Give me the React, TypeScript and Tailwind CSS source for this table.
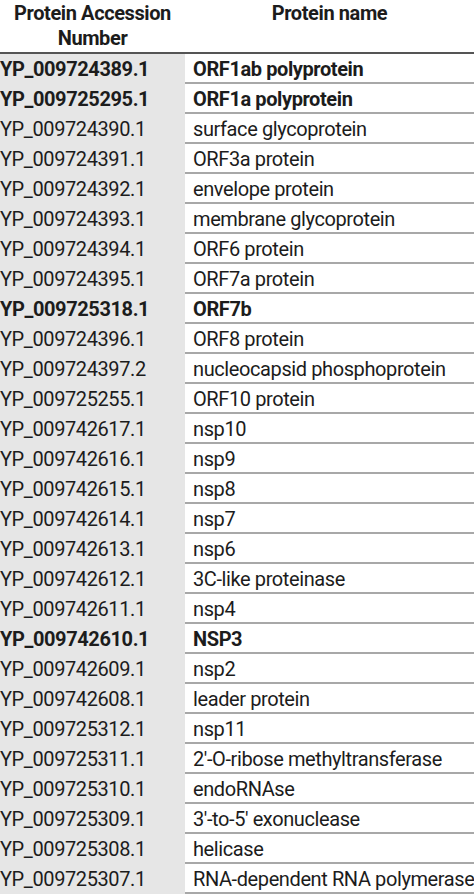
const rows: [string, string, boolean][] = [
  ['YP_009724389.1', 'ORF1ab polyprotein', true],
  ['YP_009725295.1', 'ORF1a polyprotein', true],
  ['YP_009724390.1', 'surface glycoprotein', false],
  ['YP_009724391.1', 'ORF3a protein', false],
  ['YP_009724392.1', 'envelope protein', false],
  ['YP_009724393.1', 'membrane glycoprotein', false],
  ['YP_009724394.1', 'ORF6 protein', false],
  ['YP_009724395.1', 'ORF7a protein', false],
  ['YP_009725318.1', 'ORF7b', true],
  ['YP_009724396.1', 'ORF8 protein', false],
  ['YP_009724397.2', 'nucleocapsid phosphoprotein', false],
  ['YP_009725255.1', 'ORF10 protein', false],
  ['YP_009742617.1', 'nsp10', false],
  ['YP_009742616.1', 'nsp9', false],
  ['YP_009742615.1', 'nsp8', false],
  ['YP_009742614.1', 'nsp7', false],
  ['YP_009742613.1', 'nsp6', false],
  ['YP_009742612.1', '3C-like proteinase', false],
  ['YP_009742611.1', 'nsp4', false],
  ['YP_009742610.1', 'NSP3', true],
  ['YP_009742609.1', 'nsp2', false],
  ['YP_009742608.1', 'leader protein', false],
  ['YP_009725312.1', 'nsp11', false],
  ['YP_009725311.1', '2\u2032-O-ribose methyltransferase', false],
  ['YP_009725310.1', 'endoRNAse', false],
  ['YP_009725309.1', '3\u2032-to-5\u2032 exonuclease', false],
  ['YP_009725308.1', 'helicase', false],
  ['YP_009725307.1', 'RNA-dependent RNA polymerase', false],
]

export default function App() {
  return (
    <div className="w-[474px] h-[895px] overflow-hidden bg-white text-[#1c1c1c] font-['Roboto',sans-serif] text-[20px] tracking-[-0.4px]">
      {/* Cabecera */}
      <div className="grid grid-cols-[185px_1fr] h-[54px] border-b-2 border-[#555]">
        <div className="text-center font-bold leading-[25px] pt-[1px]">
          Protein Accession
          <br />
          Number
        </div>
        <div className="text-center font-bold leading-[25px] pt-[1px]">Protein name</div>
      </div>

      {/* Filas */}
      {rows.map(([acc, name, bold]) => (
        <div
          key={acc}
          className={`grid grid-cols-[185px_1fr] h-[30px] border-b-2 border-[#a8a8a8] ${bold ? 'font-bold' : ''}`}
        >
          <div className="bg-[#e6e6e6] flex items-center whitespace-nowrap">{acc}</div>
          <div className="flex items-center pl-[8px] whitespace-nowrap">{name}</div>
        </div>
      ))}
    </div>
  )
}
